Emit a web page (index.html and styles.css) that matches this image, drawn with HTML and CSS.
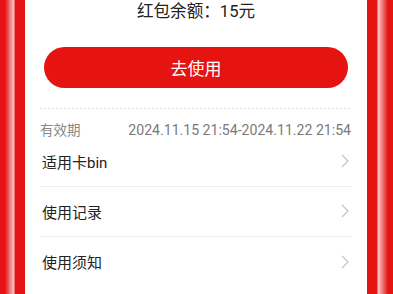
FILE: index.html
```html
<!DOCTYPE html>
<html lang="zh">
<head>
<meta charset="utf-8">
<link rel="stylesheet" href="styles.css">
</head>
<body>
<div class="page">
  <div class="edge edge-left"></div>
  <main class="card">
    <div class="balance">红包余额：15元</div>
    <button class="use-btn">去使用</button>
    <div class="dashed"></div>
    <div class="validity">
      <span class="label">有效期</span>
      <span class="value">2024.11.15 21:54-2024.11.22 21:54</span>
    </div>
    <ul class="list">
      <li class="row"><span>适用卡bin</span><svg class="chev" viewBox="0 0 8 14" width="8" height="14"><path d="M1 1 L7 7 L1 13" fill="none" stroke="#c4c4c4" stroke-width="1.2"/></svg></li>
      <li class="row"><span>使用记录</span><svg class="chev" viewBox="0 0 8 14" width="8" height="14"><path d="M1 1 L7 7 L1 13" fill="none" stroke="#c4c4c4" stroke-width="1.2"/></svg></li>
      <li class="row last"><span>使用须知</span><svg class="chev" viewBox="0 0 8 14" width="8" height="14"><path d="M1 1 L7 7 L1 13" fill="none" stroke="#c4c4c4" stroke-width="1.2"/></svg></li>
    </ul>
  </main>
  <div class="edge edge-right"></div>
</div>
</body>
</html>
```
FILE: styles.css
```css
* { box-sizing: border-box; }
html, body { margin: 0; padding: 0; }
body {
  width: 393px;
  height: 294px;
  overflow: hidden;
  font-family: Roboto, "Noto Sans CJK SC", sans-serif;
  background: #fff;
}
.page {
  display: flex;
  height: 294px;
}
.edge { flex: none; height: 100%; }
.edge-left {
  width: 25px;
  background: linear-gradient(to right, #e51313 0, #e51313 5px, #f9caca 14px, #e51313 15px, #e51313 25px);
}
.edge-right {
  width: 26px;
  background: linear-gradient(to right, #e51313 0, #e51313 10px, #f9caca 11px, #e51313 21px, #e51313 26px);
}
.card {
  flex: 1;
  background: #fff;
  padding: 0 15px;
  display: flex;
  flex-direction: column;
}
.balance {
  text-align: center;
  font-size: 16.6px;
  line-height: 24px;
  color: #222;
}
.use-btn {
  margin: 23px 4px 0;
  height: 41px;
  border: none;
  border-radius: 21px;
  background: #e61410;
  color: #fff;
  font-family: Roboto, "Noto Sans CJK SC", sans-serif;
  font-size: 17px;
  padding: 0;
}
.dashed {
  margin-top: 20px;
  height: 1px;
  background: repeating-linear-gradient(to right, #dcdcdc 0, #dcdcdc 2px, transparent 2px, transparent 4px);
}
.validity {
  height: 28px;
  padding-top: 13px;
  display: flex;
  justify-content: space-between;
  align-items: center;
  font-size: 13.5px;
  line-height: 16px;
  color: #888;
}
.validity .value { color: #7a7a7a; font-size: 14.1px; margin-right: 1px; }
.list {
  list-style: none;
  margin: 0;
  padding: 0;
}
.row {
  height: 50px;
  display: flex;
  align-items: center;
  justify-content: space-between;
  border-bottom: 1px solid #efefef;
  padding: 0 3px 1px 2px;
  font-size: 15px;
  color: #222;
}
.row.last { border-bottom: none; }
.chev { display: block; }
```
